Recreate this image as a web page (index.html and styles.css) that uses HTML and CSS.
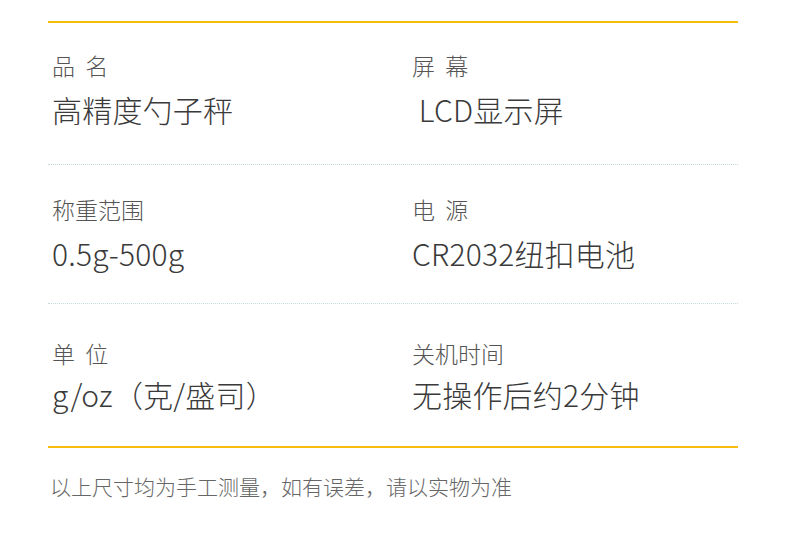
FILE: index.html
```html
<!DOCTYPE html>
<html lang="zh-CN">
<head>
<meta charset="utf-8">
<title>规格参数</title>
<link rel="stylesheet" href="styles.css">
</head>
<body>
<div class="spec">
  <div class="spec-table">
    <div class="row row-1">
      <div class="cell"><div class="label">品&nbsp;&nbsp;名</div><div class="value">高精度勺子秤</div></div>
      <div class="cell"><div class="label">屏&nbsp;&nbsp;幕</div><div class="value">&nbsp;LCD显示屏</div></div>
    </div>
    <div class="row row-2">
      <div class="cell"><div class="label">称重范围</div><div class="value">0.5g-500g</div></div>
      <div class="cell"><div class="label">电&nbsp;&nbsp;源</div><div class="value">CR2032纽扣电池</div></div>
    </div>
    <div class="row row-3">
      <div class="cell"><div class="label">单&nbsp;&nbsp;位</div><div class="value">g/oz（克/盛司）</div></div>
      <div class="cell"><div class="label">关机时间</div><div class="value">无操作后约2分钟</div></div>
    </div>
  </div>
  <p class="note">以上尺寸均为手工测量，如有误差，请以实物为准</p>
</div>
</body>
</html>
```
FILE: styles.css
```css
html, body {
  margin: 0;
  padding: 0;
  background: #fff;
}
body {
  font-family: "Noto Sans CJK SC", "Noto Sans", sans-serif;
  color: #444;
}
.spec {
  width: 690px;
  margin-left: 48px;
  padding-top: 21px;
}
.spec-table {
  border-top: 2px solid #f7bd0b;
  border-bottom: 2px solid #f7bd0b;
}
.row {
  display: grid;
  grid-template-columns: 360px 1fr;
  box-sizing: border-box;
  padding-left: 4px;
}
.row-1 { height: 141px; }
.row-2 { height: 139px; }
.row-3 { height: 143px; }
.row + .row {
  border-top: 1px dotted #c6d8dc;
}
.cell {
  display: flex;
  flex-direction: column;
  padding-top: 26px;
}
.row-2 .cell { padding-top: 28px; }
.row-3 .cell { padding-top: 33px; }
.label {
  font-size: 23px;
  line-height: 32px;
  font-weight: 300;
  color: #555;
}
.value {
  margin-top: 7px;
  font-size: 30px;
  line-height: 42px;
  font-weight: 300;
  color: #3a3a3a;
  letter-spacing: 0.2px;
}
.row-3 .value { margin-top: 4px; }
.note {
  margin: 24px 0 0 2px;
  font-size: 21px;
  line-height: 28px;
  font-weight: 300;
  color: #666;
}
```
